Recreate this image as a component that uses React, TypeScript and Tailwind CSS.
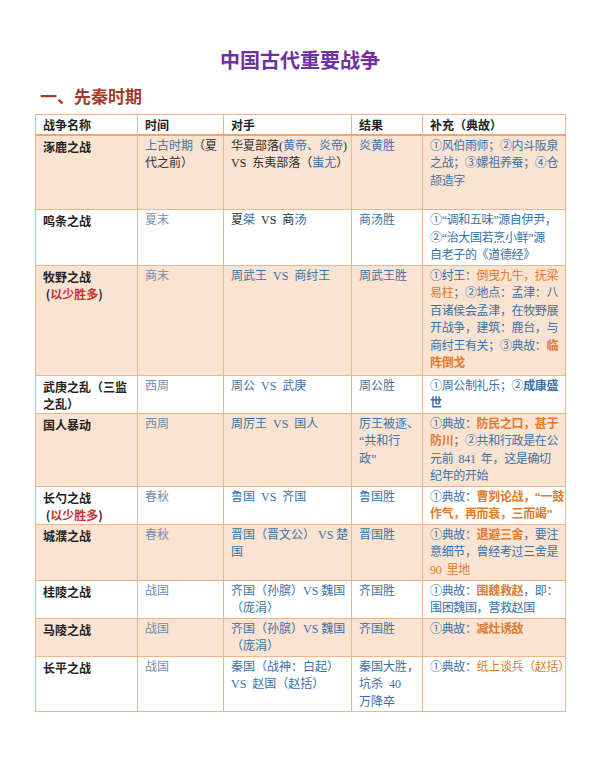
type Seg = string | { t: string; c: string };
type Line = Seg[];
type Cell = Line[];

const BLUE = "text-[#3a72a8]";
const ORANGE = "text-[#e07a2e]";
const DARK = "text-[#2b2b2b]";
const RED = "text-[#c9302c]";
const GRAY = "text-[#6f8fae]";

const b = (t: string): Seg => ({ t, c: BLUE });
const o = (t: string): Seg => ({ t, c: ORANGE });
const d = (t: string): Seg => ({ t, c: DARK });
const ob = (t: string): Seg => ({ t, c: ORANGE + " font-bold" });
const bb = (t: string): Seg => ({ t, c: BLUE + " font-bold" });

interface Row {
  h: string;
  name: Cell;
  time: Cell;
  rival: Cell;
  result: Cell;
  note: Cell;
}

const shaoSheng: Line = [d(" ("), { t: "以少胜多", c: RED }, d(")")];

const rows: Row[] = [
  {
    h: "h-[75px]",
    name: [["涿鹿之战"]],
    time: [[b("上古时期"), d("（夏")], [d("代之前）")]],
    rival: [
      [d("华夏部落"), d("("), b("黄帝、炎帝"), d(")")],
      [d("VS  东夷部落（"), b("蚩尤"), d("）")],
    ],
    result: [["炎黄胜"]],
    note: [["①风伯雨师；②内斗阪泉"], ["之战；③嫘祖养蚕；④仓"], ["颉造字"]],
  },
  {
    h: "h-[55px]",
    name: [["鸣条之战"]],
    time: [["夏末"]],
    rival: [[d("夏"), b("桀"), d("  VS  商"), b("汤")]],
    result: [["商汤胜"]],
    note: [["①\u201c调和五味\u201d源自伊尹，"], ["②\u201c治大国若烹小鲜\u201d源"], ["自老子的《道德经》"]],
  },
  {
    h: "h-[110px]",
    name: [["牧野之战"], shaoSheng],
    time: [["商末"]],
    rival: [["周武王  VS  商纣王"]],
    result: [["周武王胜"]],
    note: [
      ["①纣王：", o("倒曳九牛，抚梁")],
      [o("易柱"), "；②地点：孟津：八"],
      ["百诸侯会孟津，在牧野展"],
      ["开战争，建筑：鹿台，与"],
      ["商纣王有关；③典故：", ob("临")],
      [ob("阵倒戈")],
    ],
  },
  {
    h: "h-[38px]",
    name: [["武庚之乱（三监"], ["之乱）"]],
    time: [["西周"]],
    rival: [["周公  VS  武庚"]],
    result: [["周公胜"]],
    note: [["①周公制礼乐；②", bb("成康盛")], [bb("世")]],
  },
  {
    h: "h-[73px]",
    name: [["国人暴动"]],
    time: [["西周"]],
    rival: [["周厉王  VS  国人"]],
    result: [["厉王被逐、"], ["\u201c共和行"], ["政\u201d"]],
    note: [
      ["①典故：", ob("防民之口，甚于")],
      [ob("防川"), "；②共和行政是在公"],
      ["元前  841  年，这是确切"],
      ["纪年的开始"],
    ],
  },
  {
    h: "h-[37px]",
    name: [["长勺之战"], shaoSheng],
    time: [["春秋"]],
    rival: [["鲁国  VS  齐国"]],
    result: [["鲁国胜"]],
    note: [
      ["①典故：", ob("曹刿论战，\u201c一鼓")],
      [ob("作气，再而衰，三而竭\u201d")],
    ],
  },
  {
    h: "h-[56px]",
    name: [["城濮之战"]],
    time: [["春秋"]],
    rival: [["晋国（晋文公） VS 楚"], ["国"]],
    result: [["晋国胜"]],
    note: [["①典故：", ob("退避三舍"), "，要注"], ["意细节，曾经考过三舍是"], [o("90  里地")]],
  },
  {
    h: "h-[37px]",
    name: [["桂陵之战"]],
    time: [["战国"]],
    rival: [["齐国（孙膑）VS 魏国"], ["（庞涓）"]],
    result: [["齐国胜"]],
    note: [["①典故：", ob("围魏救赵"), "，即："], ["围困魏国，营救赵国"]],
  },
  {
    h: "h-[38px]",
    name: [["马陵之战"]],
    time: [["战国"]],
    rival: [["齐国（孙膑）VS 魏国"], ["（庞涓）"]],
    result: [["齐国胜"]],
    note: [["①典故：", ob("减灶诱敌")]],
  },
  {
    h: "h-[55px]",
    name: [["长平之战"]],
    time: [["战国"]],
    rival: [["秦国（战神：白起）"], ["VS  赵国（赵括）"]],
    result: [["秦国大胜，"], ["坑杀  40"], ["万降卒"]],
    note: [["①典故：", o("纸上谈兵（赵括）")]],
  },
];

function Lines({ cell, base }: { cell: Cell; base: string }) {
  return (
    <div className={base}>
      {cell.map((line, i) => (
        <div key={i} className="whitespace-pre leading-[17.5px]">
          {line.map((s, j) =>
            typeof s === "string" ? (
              <span key={j}>{s}</span>
            ) : (
              <span key={j} className={s.c}>
                {s.t}
              </span>
            )
          )}
        </div>
      ))}
    </div>
  );
}

const td = "border border-[#f2b48a] align-top pl-[7px] pr-[3px] pt-[2px] pb-0";
const th =
  "border border-[#f2b48a] border-b-2 border-b-[#f0a46e] text-left align-middle pl-[7px] py-0 leading-[17px] font-bold text-[#222] font-['Noto_Sans_CJK_SC',sans-serif]";

export default function App() {
  return (
    <div className="w-[600px] h-[762px] bg-white pt-[47px]">
      <h1 className="text-center text-[20px] leading-[26px] font-bold text-[#7030a0] font-['Noto_Sans_CJK_SC',sans-serif]">
        中国古代重要战争
      </h1>
      <h2 className="mt-[11px] ml-[40px] text-[17px] leading-[24px] font-bold text-[#a23a2c] font-['Noto_Sans_CJK_SC',sans-serif]">
        一、先秦时期
      </h2>

      <table className="mt-[6px] ml-[35px] w-[530px] table-fixed border-collapse text-[12px] font-['Liberation_Serif','Noto_Sans_CJK_SC',serif]">
        <colgroup>
          <col className="w-[102px]" />
          <col className="w-[86px]" />
          <col className="w-[128px]" />
          <col className="w-[71px]" />
          <col className="w-[143px]" />
        </colgroup>
        <thead>
          <tr className="h-[20px] bg-white">
            <th className={th}>战争名称</th>
            <th className={th}>时间</th>
            <th className={th}>对手</th>
            <th className={th}>结果</th>
            <th className={th}>补充（典故）</th>
          </tr>
        </thead>
        <tbody>
          {rows.map((r, i) => (
            <tr key={i} className={`${r.h} ${i % 2 === 0 ? "bg-[#fbe3d1]" : "bg-white"}`}>
              <td className={td}>
                <Lines cell={r.name} base="font-bold text-[#222] font-['Noto_Sans_CJK_SC',sans-serif]" />
              </td>
              <td className={td}>
                <Lines cell={r.time} base={GRAY} />
              </td>
              <td className={td}>
                <Lines cell={r.rival} base={BLUE} />
              </td>
              <td className={td}>
                <Lines cell={r.result} base={BLUE} />
              </td>
              <td className={td}>
                <Lines cell={r.note} base={BLUE + " tracking-[-0.35px]"} />
              </td>
            </tr>
          ))}
        </tbody>
      </table>
    </div>
  );
}
